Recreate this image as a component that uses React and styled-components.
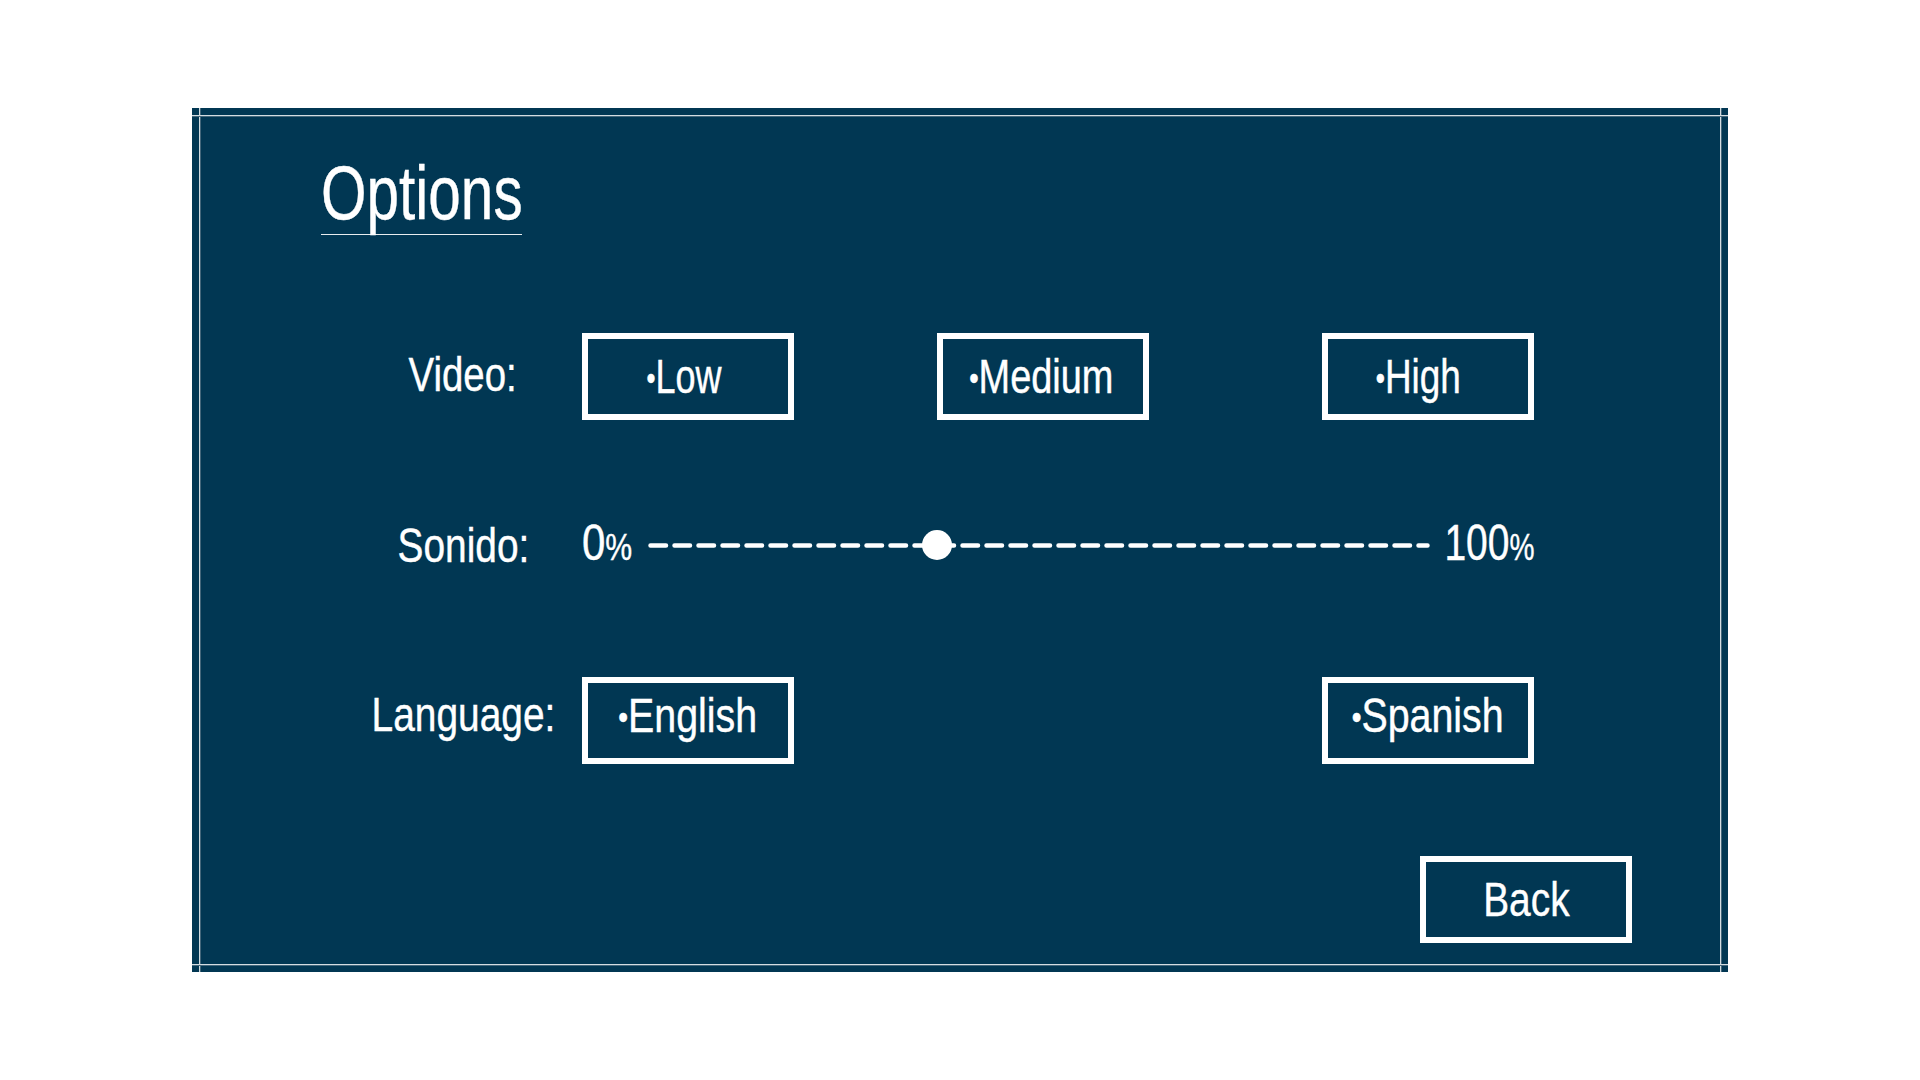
import React from "react";
import styled, { createGlobalStyle } from "styled-components";

const GlobalStyle = createGlobalStyle`
  html, body {
    margin: 0;
    padding: 0;
    background: #fff;
  }
`;

const Page = styled.div`
  width: 1920px;
  height: 1080px;
  display: flex;
  align-items: center;
  justify-content: center;
  font-family: "Liberation Sans", Arial, sans-serif;
  color: #fff;
  -webkit-text-stroke: 0.4px #fff;
`;

// the two thin guide lines run right across the panel, up to its edges
const Panel = styled.main`
  --line: #d3dce1;
  --soft: #44677b;
  width: 1536px;
  height: 864px;
  box-sizing: border-box;
  padding: 48px 96px 29px 129px;
  display: flex;
  flex-direction: column;
  background-color: #013753;
  background-repeat: no-repeat;
  background-image:
    linear-gradient(var(--line) 50%, var(--soft) 50%),
    linear-gradient(var(--line) 50%, var(--soft) 50%),
    linear-gradient(90deg, var(--line) 50%, var(--soft) 50%),
    linear-gradient(90deg, var(--line) 50%, var(--soft) 50%);
  background-size: 100% 2px, 100% 2px, 2px 100%, 2px 100%;
  background-position: 0 7px, 0 856px, 7px 0, 1528px 0;
`;

const Squeezed = styled.span`
  display: inline-block;
  white-space: nowrap;
  transform: scaleX(${(props) => props.$x || 0.8});
  transform-origin: ${(props) => props.$origin || "center"};
`;

const Title = styled.h1`
  align-self: flex-start;
  width: 201px;
  margin: 0;
  font-size: 76px;
  font-weight: 400;
  line-height: 70px;
  padding: 2px 0 6px;
  border-bottom: 1px solid #e8ecef;
`;

const Settings = styled.div`
  display: grid;
  grid-template-columns: 238px 212px 143px 212px 173px 212px;
  grid-template-rows: 87px 257px 87px;
  margin: 98px 0 0 23px;
`;

const Label = styled.div`
  grid-column: 1;
  box-sizing: border-box;
  font-size: 48px;
  line-height: 56px;
  text-align: center;
  align-self: center;
  white-space: nowrap;
  padding-bottom: ${(props) => props.$lift || 0}px;
`;

const Choice = styled.button`
  grid-column: ${(props) => props.$col};
  box-sizing: border-box;
  width: 212px;
  height: 87px;
  border: 6px solid #fff;
  background: transparent;
  color: #fff;
  font: inherit;
  font-size: 48px;
  padding: 0 ${(props) => props.$left || 0}px ${(props) => props.$lift || 0}px 0;
  white-space: nowrap;
`;

const Dot = styled.span`
  font-size: 34px;
  vertical-align: 3px;
`;

const SliderRow = styled.div`
  grid-column: 2 / 7;
  display: flex;
  align-items: center;
  justify-content: space-between;
  align-self: center;
  padding-bottom: 7px;
`;

const Percent = styled.span`
  width: ${(props) => props.$width}px;
  display: flex;
  justify-content: ${(props) => props.$end ? "flex-end" : "flex-start"};
  font-size: 50px;
  line-height: 56px;

  small {
    font-size: 36px;
  }
`;

const Track = styled.div`
  position: relative;
  width: 782px;
  height: 5px;

  svg {
    display: block;
  }
`;

const Knob = styled.span`
  position: absolute;
  left: 274px;
  top: -13px;
  width: 30px;
  height: 30px;
  border-radius: 50%;
  background: #fff;
`;

const Footer = styled.div`
  margin-top: auto;
  display: flex;
  justify-content: flex-end;
`;

const Bulleted = ({ text, x }) => (
  <Squeezed $x={x}>
    <Dot>•</Dot>
    {text}
  </Squeezed>
);

export default function App() {
  return (
    <Page>
      <GlobalStyle />
      <Panel>
        <Title>
          <Squeezed $x={0.77} $origin="left">Options</Squeezed>
        </Title>
        <Settings>
          <Label $lift={4}><Squeezed $x={0.8}>Video:</Squeezed></Label>
          <Choice $col={2} $left={8}><Bulleted text="Low" x={0.75} /></Choice>
          <Choice $col={4} $left={4}><Bulleted text="Medium" x={0.79} /></Choice>
          <Choice $col={6} $left={20}><Bulleted text="High" x={0.77} /></Choice>

          <Label $lift={5}><Squeezed $x={0.81}>Sonido:</Squeezed></Label>
          <SliderRow>
            <Percent $width={50}>
              <Squeezed $x={0.84} $origin="left">0<small>%</small></Squeezed>
            </Percent>
            <Track>
              <svg width="782" height="5" viewBox="0 0 782 5">
                <line x1="2.5" y1="2.5" x2="779.5" y2="2.5" stroke="#fff" strokeWidth="4.5" strokeLinecap="round" strokeDasharray="15.5 8.5" />
              </svg>
              <Knob />
            </Track>
            <Percent $width={89} $end>
              <Squeezed $x={0.78} $origin="right">100<small>%</small></Squeezed>
            </Percent>
          </SliderRow>

          <Label $lift={11}><Squeezed $x={0.81}>Language:</Squeezed></Label>
          <Choice $col={2} $lift={10}><Bulleted text="English" x={0.82} /></Choice>
          <Choice $col={6} $lift={10}><Bulleted text="Spanish" x={0.82} /></Choice>
        </Settings>
        <Footer>
          <Choice><Squeezed $x={0.81}>Back</Squeezed></Choice>
        </Footer>
      </Panel>
    </Page>
  );
}
